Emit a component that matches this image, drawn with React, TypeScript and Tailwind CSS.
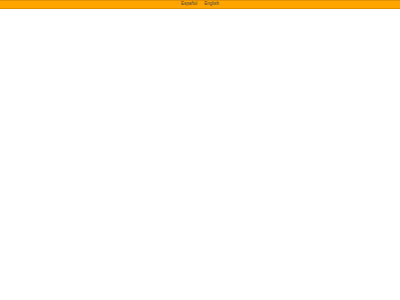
export default function App() {
  return (
    <div className="w-[400px] h-[300px] bg-white" style={{ fontFamily: '"Liberation Sans", Arial, sans-serif' }}>
      <div className="h-[9px] bg-[#ffa500] border-t border-b border-[#e09000] flex items-center justify-center gap-[7px] text-[4.5px] leading-none text-[#444]">
        <span>Español</span>
        <span>English</span>
      </div>
    </div>
  );
}
